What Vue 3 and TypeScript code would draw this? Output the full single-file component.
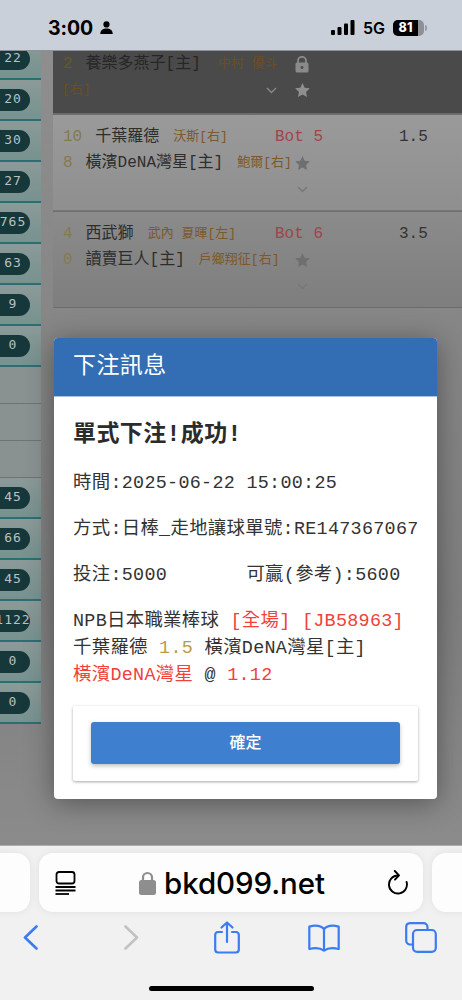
<script setup lang="ts">
type Side = { label?: string; plain?: boolean }
const side: Side[] = [
  { label: '22' }, { label: '20' }, { label: '30' }, { label: '27' },
  { label: '765' }, { label: '63' }, { label: '9' }, { label: '0' },
  { plain: true }, { plain: true }, { plain: true },
  { label: '45' }, { label: '66' }, { label: '45' }, { label: '1122' }, { label: '0' }, { label: '0' },
]
const stakeLine = '投注:5000       可贏(參考):5600'
</script>

<template>
  <div class="page">
    <header class="status">
      <div class="status-left">
        <span class="clock">3:00</span>
        <svg class="person" width="13" height="13" viewBox="0 0 13 13">
          <circle cx="6.5" cy="3.4" r="3.1" fill="#000" />
          <path d="M0.3 13 C0.3 9.2 3 7.6 6.5 7.6 C10 7.6 12.7 9.2 12.7 13 Z" fill="#000" />
        </svg>
      </div>
      <div class="status-right">
        <svg width="24" height="15" viewBox="0 0 24 15">
          <rect x="0" y="10" width="4" height="5" rx="1" />
          <rect x="6.5" y="7" width="4" height="8" rx="1" />
          <rect x="13" y="3.5" width="4" height="11.5" rx="1" />
          <rect x="19.5" y="0" width="4" height="15" rx="1" />
        </svg>
        <span class="net">5G</span>
        <div class="battery"><div class="battery-fill">81</div></div>
        <div class="nub"></div>
      </div>
    </header>

    <main class="stage">
      <aside class="sidebar">
        <div v-for="(s, i) in side" :key="i" :class="s.plain ? 'side-plain' : 'side-row'">
          <span v-if="!s.plain" class="pill">{{ s.label }}</span>
        </div>
      </aside>

      <section class="matches">
        <article class="match dark">
          <div class="line">
            <div class="left">
              <span class="score">2</span>
              <span class="team">養樂多燕子[主]</span>
              <span class="pitcher">中村 優斗</span>
            </div>
            <svg class="lock" width="14" height="17" viewBox="0 0 14 17">
              <path d="M3 7 V4.8 A4 4 0 0 1 11 4.8 V7" fill="none" stroke="#8a8a8a" stroke-width="1.8" />
              <rect x="0.5" y="6.5" width="13" height="10" rx="1.5" fill="#8a8a8a" />
              <circle cx="7" cy="11.5" r="1.4" fill="#4a4a4a" />
            </svg>
          </div>
          <div class="line">
            <div class="left wrapped">
              <span class="pitcher">[右]</span>
              <svg class="chev inline" width="11" height="7" viewBox="0 0 11 7"><path d="M1 1 L5.5 5.5 L10 1" /></svg>
            </div>
            <svg class="star" width="15" height="14" viewBox="0 0 24 23"><path d="M12 0 L15.6 7.9 L24 8.8 L17.8 14.6 L19.4 23 L12 18.8 L4.6 23 L6.2 14.6 L0 8.8 L8.4 7.9 Z" /></svg>
          </div>
        </article>

        <article class="match light">
          <div class="line">
            <div class="left top-left">
              <span class="score">10</span>
              <span class="team">千葉羅德</span>
              <span class="pitcher">沃斯[右]</span>
            </div>
            <span class="inning">Bot 5</span>
            <span class="odds">1.5</span>
          </div>
          <div class="line">
            <div class="left">
              <span class="score">8</span>
              <span class="team">橫濱DeNA灣星[主]</span>
              <span class="pitcher">鮑爾[右]</span>
            </div>
            <svg class="star" width="15" height="14" viewBox="0 0 24 23"><path d="M12 0 L15.6 7.9 L24 8.8 L17.8 14.6 L19.4 23 L12 18.8 L4.6 23 L6.2 14.6 L0 8.8 L8.4 7.9 Z" /></svg>
          </div>
          <div class="line">
            <div class="left"></div>
            <svg class="chev" width="11" height="7" viewBox="0 0 11 7"><path d="M1 1 L5.5 5.5 L10 1" /></svg>
          </div>
        </article>

        <article class="match mid">
          <div class="line">
            <div class="left top-left">
              <span class="score">4</span>
              <span class="team">西武獅</span>
              <span class="pitcher">武內 夏暉[左]</span>
            </div>
            <span class="inning">Bot 6</span>
            <span class="odds">3.5</span>
          </div>
          <div class="line">
            <div class="left">
              <span class="score">0</span>
              <span class="team">讀賣巨人[主]</span>
              <span class="pitcher">戶鄉翔征[右]</span>
            </div>
            <svg class="star" width="15" height="14" viewBox="0 0 24 23"><path d="M12 0 L15.6 7.9 L24 8.8 L17.8 14.6 L19.4 23 L12 18.8 L4.6 23 L6.2 14.6 L0 8.8 L8.4 7.9 Z" /></svg>
          </div>
          <div class="line">
            <div class="left"></div>
            <svg class="chev" width="11" height="7" viewBox="0 0 11 7"><path d="M1 1 L5.5 5.5 L10 1" /></svg>
          </div>
        </article>
      </section>

      <div class="modal">
        <div class="modal-head">下注訊息</div>
        <div class="modal-body">
          <h2 class="modal-title">單式下注!成功!</h2>
          <p class="info">時間:2025-06-22 15:00:25</p>
          <p class="info">方式:日棒_走地讓球單號:RE147367067</p>
          <p class="info">{{ stakeLine }}</p>
          <div class="bet">
            <div>NPB日本職業棒球 <span class="red">[全場] [JB58963]</span></div>
            <div>千葉羅德 <span class="gold">1.5</span> 橫濱DeNA灣星[主]</div>
            <div><span class="red">橫濱DeNA灣星</span> @ <span class="red">1.12</span></div>
          </div>
          <div class="actions">
            <button class="confirm" type="button">確定</button>
          </div>
        </div>
      </div>
    </main>

    <footer class="safari">
      <div class="tabs">
        <div class="tab side-tab"></div>
        <div class="tab url">
          <svg width="21" height="24" viewBox="0 0 21 24" fill="none" stroke="#000" stroke-width="1.8">
            <rect x="1.5" y="1" width="18" height="11.5" rx="2.5" />
            <path d="M0.5 16 H20.5 M0.5 19.5 H20.5" />
            <path d="M0.5 23 H14" stroke-width="1.8" />
          </svg>
          <div class="address">
            <svg width="17" height="24" viewBox="0 0 17 24">
              <path d="M4 10 V6.5 A4.5 4.5 0 0 1 13 6.5 V10" fill="none" stroke="#8e8e8e" stroke-width="2.2" />
              <rect x="0" y="9" width="17" height="15" rx="2.5" fill="#8e8e8e" />
            </svg>
            <span class="host">bkd099.net</span>
          </div>
          <svg width="20" height="25" viewBox="0 0 20 25" fill="none" stroke="#000" stroke-width="1.9" stroke-linecap="round" stroke-linejoin="round">
            <path d="M10 5.5 A9 9 0 1 0 18.6 12" />
            <path d="M6.8 1 L11 5.4 L7 9.6" />
          </svg>
        </div>
        <div class="tab side-tab"></div>
      </div>
      <nav class="toolbar">
        <svg width="15" height="25" viewBox="0 0 15 25" fill="none" stroke="#3a7cf2" stroke-width="2.6" stroke-linecap="round" stroke-linejoin="round"><path d="M13.5 1.5 L2 12.5 L13.5 23.5" /></svg>
        <svg width="15" height="25" viewBox="0 0 15 25" fill="none" stroke="#c2c2c4" stroke-width="2.6" stroke-linecap="round" stroke-linejoin="round"><path d="M1.5 1.5 L13 12.5 L1.5 23.5" /></svg>
        <svg width="26" height="33" viewBox="0 0 26 33" fill="none" stroke="#3a7cf2" stroke-width="2.2" stroke-linecap="round" stroke-linejoin="round">
          <path d="M8 11 H4 A3 3 0 0 0 1.2 14 V28.5 A3 3 0 0 0 4 31.5 H22 A3 3 0 0 0 24.8 28.5 V14 A3 3 0 0 0 22 11 H18" />
          <path d="M13 21 V1.5 M7.5 6.5 L13 1.5 L18.5 6.5" />
        </svg>
        <svg width="32" height="28" viewBox="0 0 32 28" fill="none" stroke="#3a7cf2" stroke-width="2.2" stroke-linecap="round" stroke-linejoin="round">
          <path d="M16 5 C13 1.8 7 1 1.3 2.6 V25 C7 23.6 12.5 24 16 26.6 C19.5 24 25 23.6 30.7 25 V2.6 C25 1 19 1.8 16 5 Z" />
          <path d="M16 5 V26" />
        </svg>
        <svg width="32" height="31" viewBox="0 0 32 31" fill="none" stroke="#3a7cf2" stroke-width="2.2">
          <path d="M7 22.5 H5 A4 4 0 0 1 1.2 18.5 V5 A4 4 0 0 1 5 1.2 H18.5 A4 4 0 0 1 22.5 5 V7" />
          <rect x="8" y="8" width="22.8" height="21.8" rx="4" />
        </svg>
      </nav>
      <div class="home-row"><div class="home"></div></div>
    </footer>
  </div>
</template>

<style>
html, body { margin: 0; background: #f1f1f2; }
</style>

<style scoped>
.page {
  width: 462px;
  height: 1000px;
  display: flex;
  flex-direction: column;
  overflow: hidden;
  font-family: "Liberation Mono", "Noto Sans CJK TC", monospace;
}
.status {
  height: 51px;
  flex: none;
  background: #c9d0da;
  display: flex;
  align-items: center;
  justify-content: space-between;
  padding: 5px 35px 0 48px;
  box-sizing: border-box;
  color: #000;
  font-family: Inter, "Liberation Sans", sans-serif;
  position: relative;
  z-index: 2;
  border-bottom: 1px solid #8e9298;
}
.status-left { display: flex; align-items: center; gap: 7px; }
.clock { font-size: 19.5px; font-weight: 700; letter-spacing: -0.1px; }
.status-right { display: flex; align-items: center; }
.net { font-size: 16px; font-weight: 600; margin: 0 8px 0 8px; }
.battery {
  width: 31px;
  height: 16px;
  background: #8e9097;
  border-radius: 5px;
  overflow: hidden;
}
.battery-fill {
  width: 25px;
  height: 16px;
  background: #000;
  color: #fff;
  font-size: 12.5px;
  font-weight: 800;
  line-height: 16px;
  text-align: center;
}
.nub { width: 2px; height: 6px; background: #9a9ca2; border-radius: 0 2px 2px 0; margin-left: 1px; }

.stage {
  flex: 1;
  min-height: 0;
  position: relative;
  overflow: hidden;
  background: linear-gradient(#8e8e8e 0%, #858585 40%, #7f7f7f 70%, #8b8b8b 100%);
  display: flex;
  align-items: flex-start;
}
.sidebar {
  width: 41px;
  flex: none;
  margin-top: -12px;
}
.side-row {
  padding-top: 9px;
  height: 30px;
  background: linear-gradient(#8b9a98, #77928f);
  border-bottom: 2px solid #2c6f73;
  overflow: hidden;
  display: flex;
}
.side-plain {
  height: 36px;
  background: #8a9291;
  border-bottom: 1px solid #6e7473;
}
.pill {
  flex: none;
  width: 44px;
  height: 22px;
  margin-left: -14px;
  background: #17383a;
  border-radius: 0 11px 11px 0;
  color: #b9c1c1;
  font-family: "DejaVu Sans Mono", monospace;
  font-size: 13px;
  letter-spacing: 1px;
  line-height: 20px;
  display: flex;
  justify-content: center;
  padding-left: 10px;
  box-sizing: border-box;
  white-space: nowrap;
}
.matches {
  margin: -9px 0 0 12px;
  flex: 1;
  min-width: 0;
}
.match { padding: 9px 0 8px 10px; }
.dark {
  background: #4a4a4a;
  padding-bottom: 10px;
  border-bottom: 2px solid #6c6c6c;
}
.light { background: linear-gradient(#9a9a9a, #8f8f8f); border-bottom: 1px solid #777; }
.mid { background: linear-gradient(#8b8b8b, #7e7e7e); border-top: 1px solid #6f6f6f; border-bottom: 1px solid #6c6c6c; }
.line {
  height: 26px;
  display: flex;
  align-items: center;
  font-size: 16px;
  line-height: 26px;
  white-space: nowrap;
}
.left { width: 232px; flex: none; display: flex; align-items: center; }
.top-left { width: 212px; }
.wrapped { justify-content: space-between; padding-right: 18px; box-sizing: border-box; margin-left: -1px; width: 233px; }
.score { color: #85794e; margin-right: 13px; }
.team { color: #2d2d2d; margin-right: 14px; }
.pitcher { color: #7d5829; font-size: 13px; }
.dark .score { color: #66572c; }
.dark .team { color: #262626; margin-right: 17px; }
.dark .pitcher { color: #6d4d24; }
.inning { color: #a2444a; width: 124px; flex: none; }
.odds { color: #333; }
.star { fill: #6f6f6f; flex: none; }
.dark .star { fill: #8f8f8f; }
.lock { flex: none; margin-left: 0; }
.chev { fill: none; stroke: #777; stroke-width: 1.3; margin-left: 2px; flex: none; }
.dark .chev { stroke: #8a8a8a; }

.modal {
  position: absolute;
  left: 54px;
  top: 287px;
  width: 383px;
  background: #fff;
  border-radius: 4px;
  box-shadow: 0 4px 28px rgba(0, 0, 0, 0.38);
  overflow: hidden;
}
.modal-head {
  height: 59px;
  background: #336db3;
  color: #fff;
  font-size: 23px;
  letter-spacing: 0.4px;
  line-height: 59px;
  padding-left: 19px;
  border-bottom: 1px solid #a9c4e2;
  box-sizing: border-box;
}
.modal-body { padding: 22px 19px 18px; color: #333; }
.modal-title { margin: 0 0 21px; font-size: 23px; font-weight: 700; letter-spacing: 0.4px; line-height: 32px; height: 32px; color: #2b2b2b; }
.info {
  margin: 0;
  height: 46px;
  font-size: 18.4px;
  line-height: 24px;
  letter-spacing: 0.3px;
  white-space: pre;
}
.bet { font-size: 18.4px; line-height: 27px; letter-spacing: 0.3px; white-space: pre; margin-top: -2px; }
.red { color: #f0413a; }
.gold { color: #bd9c41; }
.actions {
  margin-top: 17px;
  background: #fff;
  padding: 16px 18px 17px;
  border-radius: 2px;
  box-shadow: 0 1px 3px rgba(0, 0, 0, 0.35);
}
.confirm {
  display: block;
  width: 100%;
  height: 42px;
  border: 0;
  border-radius: 3px;
  padding: 0 0 4px;
  background: #3f7fcf;
  color: #fff;
  font-family: "Liberation Mono", "Noto Sans CJK TC", monospace;
  font-size: 16px;
  font-weight: 500;
  box-shadow: 0 2px 4px rgba(0, 0, 0, 0.25);
}

.safari {
  height: 155px;
  flex: none;
  background: #f1f1f2;
  border-top: 1px solid #aeaeae;
  box-sizing: border-box;
  font-family: Inter, "Liberation Sans", sans-serif;
}
.tabs {
  margin: 7px 0 0 -30px;
  display: flex;
  gap: 9px;
  height: 59px;
}
.tab {
  flex: none;
  height: 59px;
  background: #fdfdfd;
  border-radius: 14px;
  box-shadow: 0 0 8px rgba(0, 0, 0, 0.07);
}
.side-tab { width: 60px; }
.url {
  width: 384px;
  display: flex;
  align-items: center;
  justify-content: space-between;
  padding: 0 15px 0 16px;
  box-sizing: border-box;
}
.address { display: flex; align-items: center; gap: 8px; }
.host { font-size: 29.5px; font-weight: 500; color: #000; letter-spacing: -0.1px; }
.toolbar {
  display: grid;
  grid-template-columns: 101px 90px 94px 97px 32px;
  align-items: center;
  padding-left: 23px;
  height: 33px;
  margin-top: 9px;
}
.home-row { display: flex; justify-content: center; margin-top: 32px; }
.home { width: 165px; height: 5px; background: #000; border-radius: 3px; }
</style>
